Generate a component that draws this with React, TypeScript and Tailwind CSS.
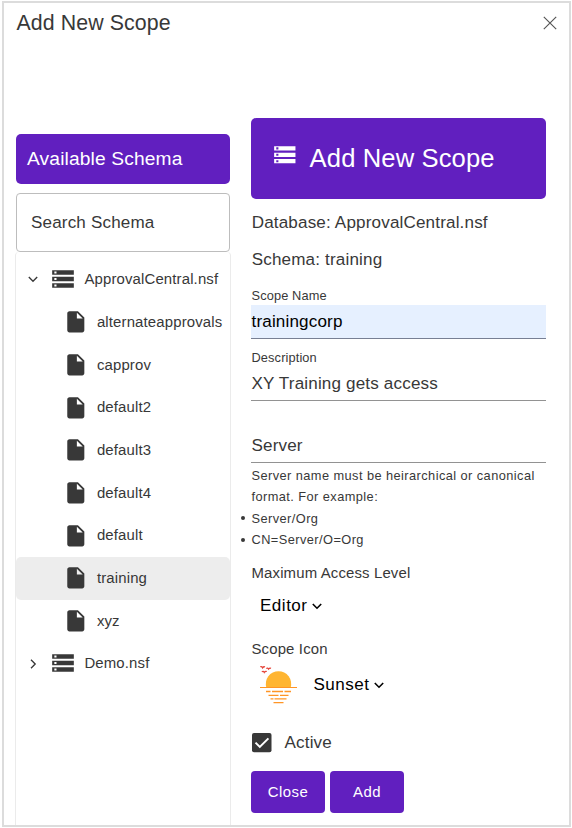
import React from 'react';
import { MdStorage, MdInsertDriveFile } from 'react-icons/md';

const files = ['alternateapprovals', 'capprov', 'default2', 'default3', 'default4', 'default', 'training', 'xyz'];

function Chevron({ right = false, heavy = false }: { right?: boolean; heavy?: boolean }) {
  return (
    <svg
      className={right ? 'size-3 shrink-0 -rotate-90' : 'size-3 shrink-0'}
      viewBox="0 0 12 12"
      fill="none"
      stroke="currentColor"
      strokeWidth={heavy ? 1.6 : 1.35}
    >
      <path d="M1.8 4 6 8.2 10.2 4" />
    </svg>
  );
}

function Sunset() {
  return (
    <svg className="h-[38px] w-[38px] shrink-0" viewBox="0 0 38 38" fill="none">
      <path d="M6.3 21.5A12.7 12.7 0 1 1 30.7 21.5Z" fill="#ffb531" />
      <path d="M0 21.5H37" stroke="#ff9526" strokeWidth="1.2" />
      <path
        d="M6 25.5h4.500M12 25.5h11M24.500 25.5H31M8.500 29.3h10M20 29.3h8.500M10.500 32.900h3M14.500 32.900h12M13.500 36.700h10"
        stroke="#ff9526"
        strokeWidth="1.3"
      />
      <path
        d="M.3.7Q2 .3 2.600 1.800 3.700.300 5 1M6.300 2.500Q7.800 1.600 8.500 3.100 9.600 1.600 11 2.300M1.800 5.700Q3.500 4.700 4.300 6.400 5.400 4.900 6.800 5.500"
        stroke="#e5453b"
        strokeWidth="1.3"
      />
    </svg>
  );
}

function Root({ name, open = false }: { name: string; open?: boolean }) {
  return (
    <div className="flex h-[42.7px] items-center pl-[11px]">
      <Chevron right={!open} />
      <MdStorage className="mb-px ml-[10.700px] size-[26px] shrink-0" />
      <span className="ml-[8.700px] text-[14.93px] tracking-[0.15px]">{name}</span>
    </div>
  );
}

export default function App() {
  return (
    <div className="h-[828px] w-[572px] overflow-hidden bg-white pl-[2px] pr-[1px] pt-[1px] pb-[1px] font-['Liberation_Sans',Arial,sans-serif] text-[17.07px] tracking-[0.16px] text-[#383838]">
      <div className="flex h-[826px] w-[569px] flex-col overflow-hidden border-2 border-[#dcdcdc]">
        <header className="flex h-[115px] items-start justify-between pt-[7px] pr-[12px] pl-[12.5px]">
          <h1 className="text-[21.33px] leading-[26px] tracking-[0.1px]">Add New Scope</h1>
          <button className="mt-[6px]" aria-label="Close dialog">
            <svg className="size-[14px]" viewBox="0 0 14 14" fill="none" stroke="#555" strokeWidth="1.15">
              <path d="m.8.8 12.400 12.400M13.200.8.8 13.200" />
            </svg>
          </button>
        </header>

        <main className="flex min-h-0 flex-1 pl-[11px]">
          <aside className="flex w-[216px] flex-col pt-4">
            <div className="ml-px flex h-[50px] w-[214px] items-center rounded-[5px] bg-[#611fbf] pt-px pl-[11px] text-[19.2px] tracking-[0.14px] text-white">
              Available Schema
            </div>
            <div className="mt-[8.500px] ml-px flex h-[59.500px] w-[214px] shrink-0 items-center rounded-[4px] border border-[#bdbdbd] pt-[1.500px] pl-[14px]">
              Search Schema
            </div>
            <div className="min-h-0 flex-1 rounded-t-[4px] border-x border-[#ebebeb] pt-[6px]">
              <Root name="ApprovalCentral.nsf" open />
              {files.map((file) => (
                <div
                  key={file}
                  className={
                    file === 'training'
                      ? 'flex h-[42.7px] items-center rounded-[5px] bg-[#ededed] pl-[46.500px]'
                      : 'flex h-[42.7px] items-center pl-[46.500px]'
                  }
                >
                  <MdInsertDriveFile className="size-[25.6px] shrink-0" />
                  <span className="ml-[8.800px] text-[14.93px] tracking-[0.15px]">{file}</span>
                </div>
              ))}
              <Root name="Demo.nsf" />
            </div>
          </aside>

          <section className="ml-5 w-[295px]">
            <div className="flex h-[81px] items-center rounded-[5px] bg-[#611fbf] pl-[21px] text-[25.6px] tracking-[0.12px] text-white">
              <MdStorage className="mb-2 size-[25.6px]" />
              <h2 className="ml-[12px]">Add New Scope</h2>
            </div>
            <p className="mt-[6px] h-9 pl-[0.700px] leading-9">Database: ApprovalCentral.nsf</p>
            <p className="h-9 pl-[0.700px] leading-[37px]">Schema: training</p>

            <div className="mt-[10px] h-[18px] pl-[0.500px] text-[12.8px] leading-[17px] tracking-[0.12px]">Scope Name</div>
            <div className="h-[34px] border-b border-[#777f94] bg-[#e6f0ff] pl-[0.500px] leading-[33px] text-black">trainingcorp</div>
            <div className="mt-[10px] h-[17px] pl-[0.500px] text-[12.8px] leading-[17px] tracking-[0.12px]">Description</div>
            <div className="h-[35px] border-b border-[#929292] pl-[0.500px] leading-[35px]">XY Training gets access</div>
            <div className="mt-[27px] h-[35px] border-b border-[#929292] pl-[0.500px] leading-[35px]">Server</div>

            <div className="mt-[2px] pl-[0.500px] text-[12.8px] leading-[21.3px] tracking-[0.43px] whitespace-nowrap">
              <p>Server name must be heirarchical or canonical<br />format. For example:</p>
              <ul>
                {['Server/Org', 'CN=Server/O=Org'].map((item) => (
                  <li key={item} className="-ml-[11px] flex items-center">
                    <span className="mr-[7px] size-1 rounded-full bg-[#383838]" />
                    {item}
                  </li>
                ))}
              </ul>
            </div>

            <div className="mt-[13px] h-5 pl-[0.500px] text-[14.93px] leading-5 tracking-[0.15px]">Maximum Access Level</div>
            <button className="mt-[11px] ml-[9px] flex h-6 items-center tracking-[0.49px] text-black">
              Editor
              <span className="ml-[3px]"><Chevron heavy /></span>
            </button>
            <div className="mt-[21px] h-5 pl-[0.500px] text-[14.93px] leading-5 tracking-[0.15px]">Scope Icon</div>
            <div className="mt-[7px] ml-[9px] flex h-[38px] items-center text-black">
              <Sunset />
              <button className="ml-[15.500px] flex items-center tracking-[0.49px]">
                Sunset
                <span className="ml-[3px]"><Chevron heavy /></span>
              </button>
            </div>

            <label className="mt-[29px] flex h-5 items-center">
              <svg className="ml-px size-5" viewBox="0 0 20 20">
                <rect width="19.500" height="19.200" rx="2" fill="#383838" />
                <path d="m3.500 9.600 4.300 4.300 8.600-8.500" fill="none" stroke="white" strokeWidth="2" />
              </svg>
              <span className="ml-[12.500px]">Active</span>
            </label>
            <div className="mt-[17.500px] flex gap-[5px] text-[14.93px] tracking-[0.43px] text-white">
              <button className="h-[42.500px] w-[74px] rounded-[4px] bg-[#611fbf]">Close</button>
              <button className="h-[42.500px] w-[74px] rounded-[4px] bg-[#611fbf]">Add</button>
            </div>
          </section>
        </main>
      </div>
    </div>
  );
}
